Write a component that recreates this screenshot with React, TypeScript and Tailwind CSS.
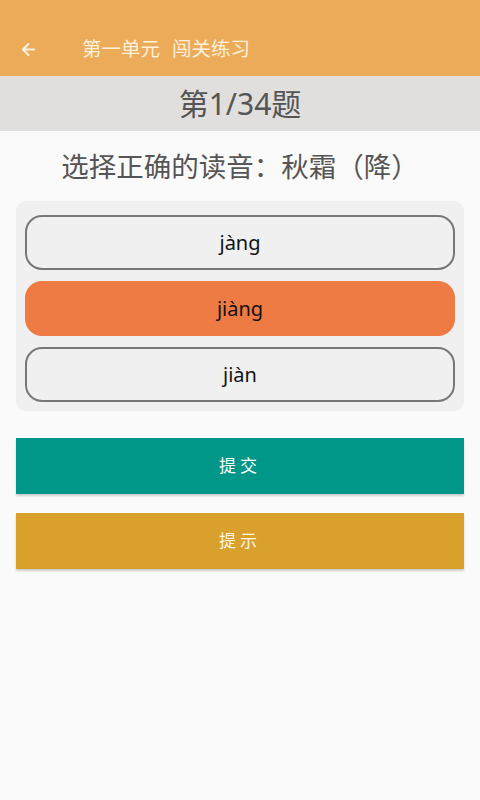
import { ArrowLeft } from 'lucide-react'

const options = [
  { label: 'jàng', selected: false },
  { label: 'jiàng', selected: true },
  { label: 'jiàn', selected: false },
]

export default function App() {
  return (
    <div
      className="min-h-[800px] w-[480px] bg-[#fafafa]"
      style={{ fontFamily: '"Noto Sans", "Noto Sans CJK SC", sans-serif' }}
    >
      {/* toolbar */}
      <header className="flex h-[76px] items-end bg-[#ebab58] pb-[14px] shadow-[0_1px_3px_rgba(0,0,0,0.25)]">
        <ArrowLeft className="mb-[3px] ml-[19px] h-[19px] w-[19px] text-[#fdf3e4]" strokeWidth={2.5} />
        <h1 className="ml-[44px] flex gap-[12px] text-[19.5px] leading-[26px] text-[#fdf1dc]">
          <span>第一单元</span>
          <span>闯关练习</span>
        </h1>
      </header>

      {/* progress */}
      <div className="flex h-[55px] items-center justify-center bg-[#e0dfdd]">
        <span className="text-[30px] text-[#555555]">第1/34题</span>
      </div>

      <main className="px-[16px]">
        <p className="mt-[18px] text-center text-[27.5px] leading-[36px] text-[#555555]">
          选择正确的读音：秋霜（降）
        </p>

        <div className="mt-[16px] flex flex-col gap-[11px] rounded-[10px] bg-[#f0f0f0] px-[9px] pb-[9px] pt-[14px]">
          {options.map((o) =>
            o.selected ? (
              <button
                key={o.label}
                className="flex h-[55px] items-center justify-center rounded-[17px] bg-[#ee7a44] text-[20px] text-[#111111]"
              >
                {o.label}
              </button>
            ) : (
              <button
                key={o.label}
                className="flex h-[55px] items-center justify-center rounded-[17px] border-2 border-[#777777] bg-[#f0f0f0] text-[20px] text-[#111111]"
              >
                {o.label}
              </button>
            )
          )}
        </div>

        <button className="mt-[27px] flex h-[56px] w-full items-center justify-center bg-[#009688] text-[17px] tracking-[4px] text-white shadow-[0_2px_2px_rgba(0,0,0,0.18)]">
          提交
        </button>
        <button className="mt-[19px] flex h-[56px] w-full items-center justify-center bg-[#d9a02c] text-[17px] tracking-[4px] text-[#fdf5e6] shadow-[0_2px_2px_rgba(0,0,0,0.18)]">
          提示
        </button>
      </main>
    </div>
  )
}
